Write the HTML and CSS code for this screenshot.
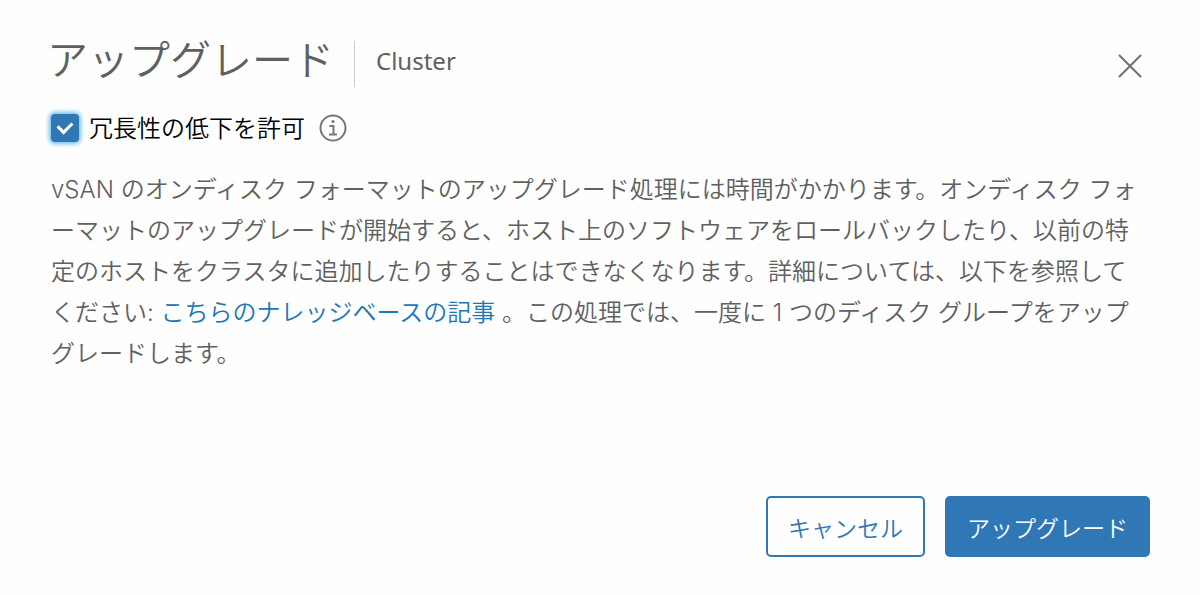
FILE: index.html
```
<!DOCTYPE html>
<html lang="ja">
<head>
    <meta charset="UTF-8">
    <meta name="viewport" content="width=device-width, initial-scale=1.0">
    <title>アップグレード</title>
    <link rel="stylesheet" href="styles.css">
</head>
<body>
    <div class="modal" role="dialog" aria-labelledby="modal-title">
        <header class="modal-header">
            <h1 class="modal-title" id="modal-title">アップグレード</h1>
            <span class="modal-subtitle">Cluster</span>
            <button type="button" class="close-button" aria-label="閉じる">
                <svg width="24" height="24" viewBox="0 0 24 24" fill="none" stroke="#707070" stroke-width="2" stroke-linecap="round">
                    <path d="M1.5 1.5l21 21M22.5 1.5l-21 21"/>
                </svg>
            </button>
        </header>
        <main class="modal-body">
            <div class="option">
                <input type="checkbox" id="reduced" class="checkbox" checked>
                <label for="reduced">冗長性の低下を許可</label>
                <button type="button" class="info-button" aria-label="情報">
                    <svg width="28" height="28" viewBox="0 0 28 28" fill="none" stroke="#777" stroke-width="2">
                        <circle cx="14" cy="14" r="12.5"/>
                        <path d="M10.5 12h4v8M10 20.5h8"/>
                        <circle cx="14" cy="7.5" r="1.6" fill="#777" stroke="none"/>
                    </svg>
                </button>
            </div>
            <p class="message">vSAN のオンディスク フォーマットのアップグレード処理には時間がかかります。オンディスク フォーマットのアップグレードが開始すると、ホスト上のソフトウェアをロールバックしたり、以前の特定のホストをクラスタに追加したりすることはできなくなります。詳細については、以下を参照してください: <a href="#">こちらのナレッジベースの記事</a> 。この処理では、一度に 1 つのディスク グループをアップグレードします。</p>
        </main>
        <footer class="modal-footer">
            <button type="button" class="btn btn-outline">キャンセル</button>
            <button type="button" class="btn btn-primary">アップグレード</button>
        </footer>
    </div>
</body>
</html>
```
FILE: styles.css
```
* {
    box-sizing: border-box;
}
body {
    margin: 0;
    background-color: #fefefe;
    color: #606060;
    font-family: Inter, "Noto Sans CJK JP", sans-serif;
    font-size: 24px;
    font-weight: 350;
}
button {
    font-family: inherit;
    font-weight: inherit;
    cursor: pointer;
}
.modal {
    display: flex;
    flex-direction: column;
    min-height: 100vh;
    padding: 36px 50px 38px 47px;
}
.modal-header {
    display: flex;
    align-items: center;
    height: 56px;
}
.modal-title {
    margin: 0;
    padding-bottom: 8px;
    font-size: 41px;
    font-weight: 350;
    line-height: 48px;
}
.modal-subtitle {
    margin-left: 20px;
    padding: 0 0 6px 21px;
    border-left: 1px solid #ccc;
    font-family: "Noto Sans", sans-serif;
    font-weight: 400;
    line-height: 40px;
}
.close-button {
    display: flex;
    margin-left: auto;
    padding: 12px 8px 8px;
    border: none;
    background: none;
}
.option {
    display: flex;
    align-items: center;
    height: 40px;
    margin-top: 16px;
}
.option label {
    margin-left: 10px;
    padding-bottom: 4px;
    color: #000;
}
.checkbox {
    display: flex;
    align-items: center;
    justify-content: center;
    width: 28px;
    height: 28px;
    margin: 0 0 0 4px;
    appearance: none;
    border-radius: 4px;
    background-color: #3077b6;
    box-shadow: 0 0 4px 2px #6bc1e8;
}
.checkbox:checked::before {
    content: "";
    width: 7px;
    height: 11px;
    margin-bottom: 5px;
    border: solid #fff;
    border-width: 0 3px 3px 0;
    transform: rotate(45deg);
}
.info-button {
    display: flex;
    margin-left: 14px;
    padding: 0;
    border: none;
    background: none;
}
.message {
    margin: 21px 6px 0 4px;
    line-height: 41px;
    line-break: anywhere;
}
.message a {
    color: #2077b4;
    text-decoration: none;
}
.modal-footer {
    display: flex;
    justify-content: flex-end;
    gap: 20px;
    margin-top: auto;
}
.btn {
    height: 61px;
    padding: 0 20px;
    border: 2px solid #3077b6;
    border-radius: 5px;
    font-size: 23px;
}
.btn-outline {
    background-color: #fefefe;
    color: #3077b6;
}
.btn-primary {
    background-color: #3077b6;
    color: #fff;
}
```
